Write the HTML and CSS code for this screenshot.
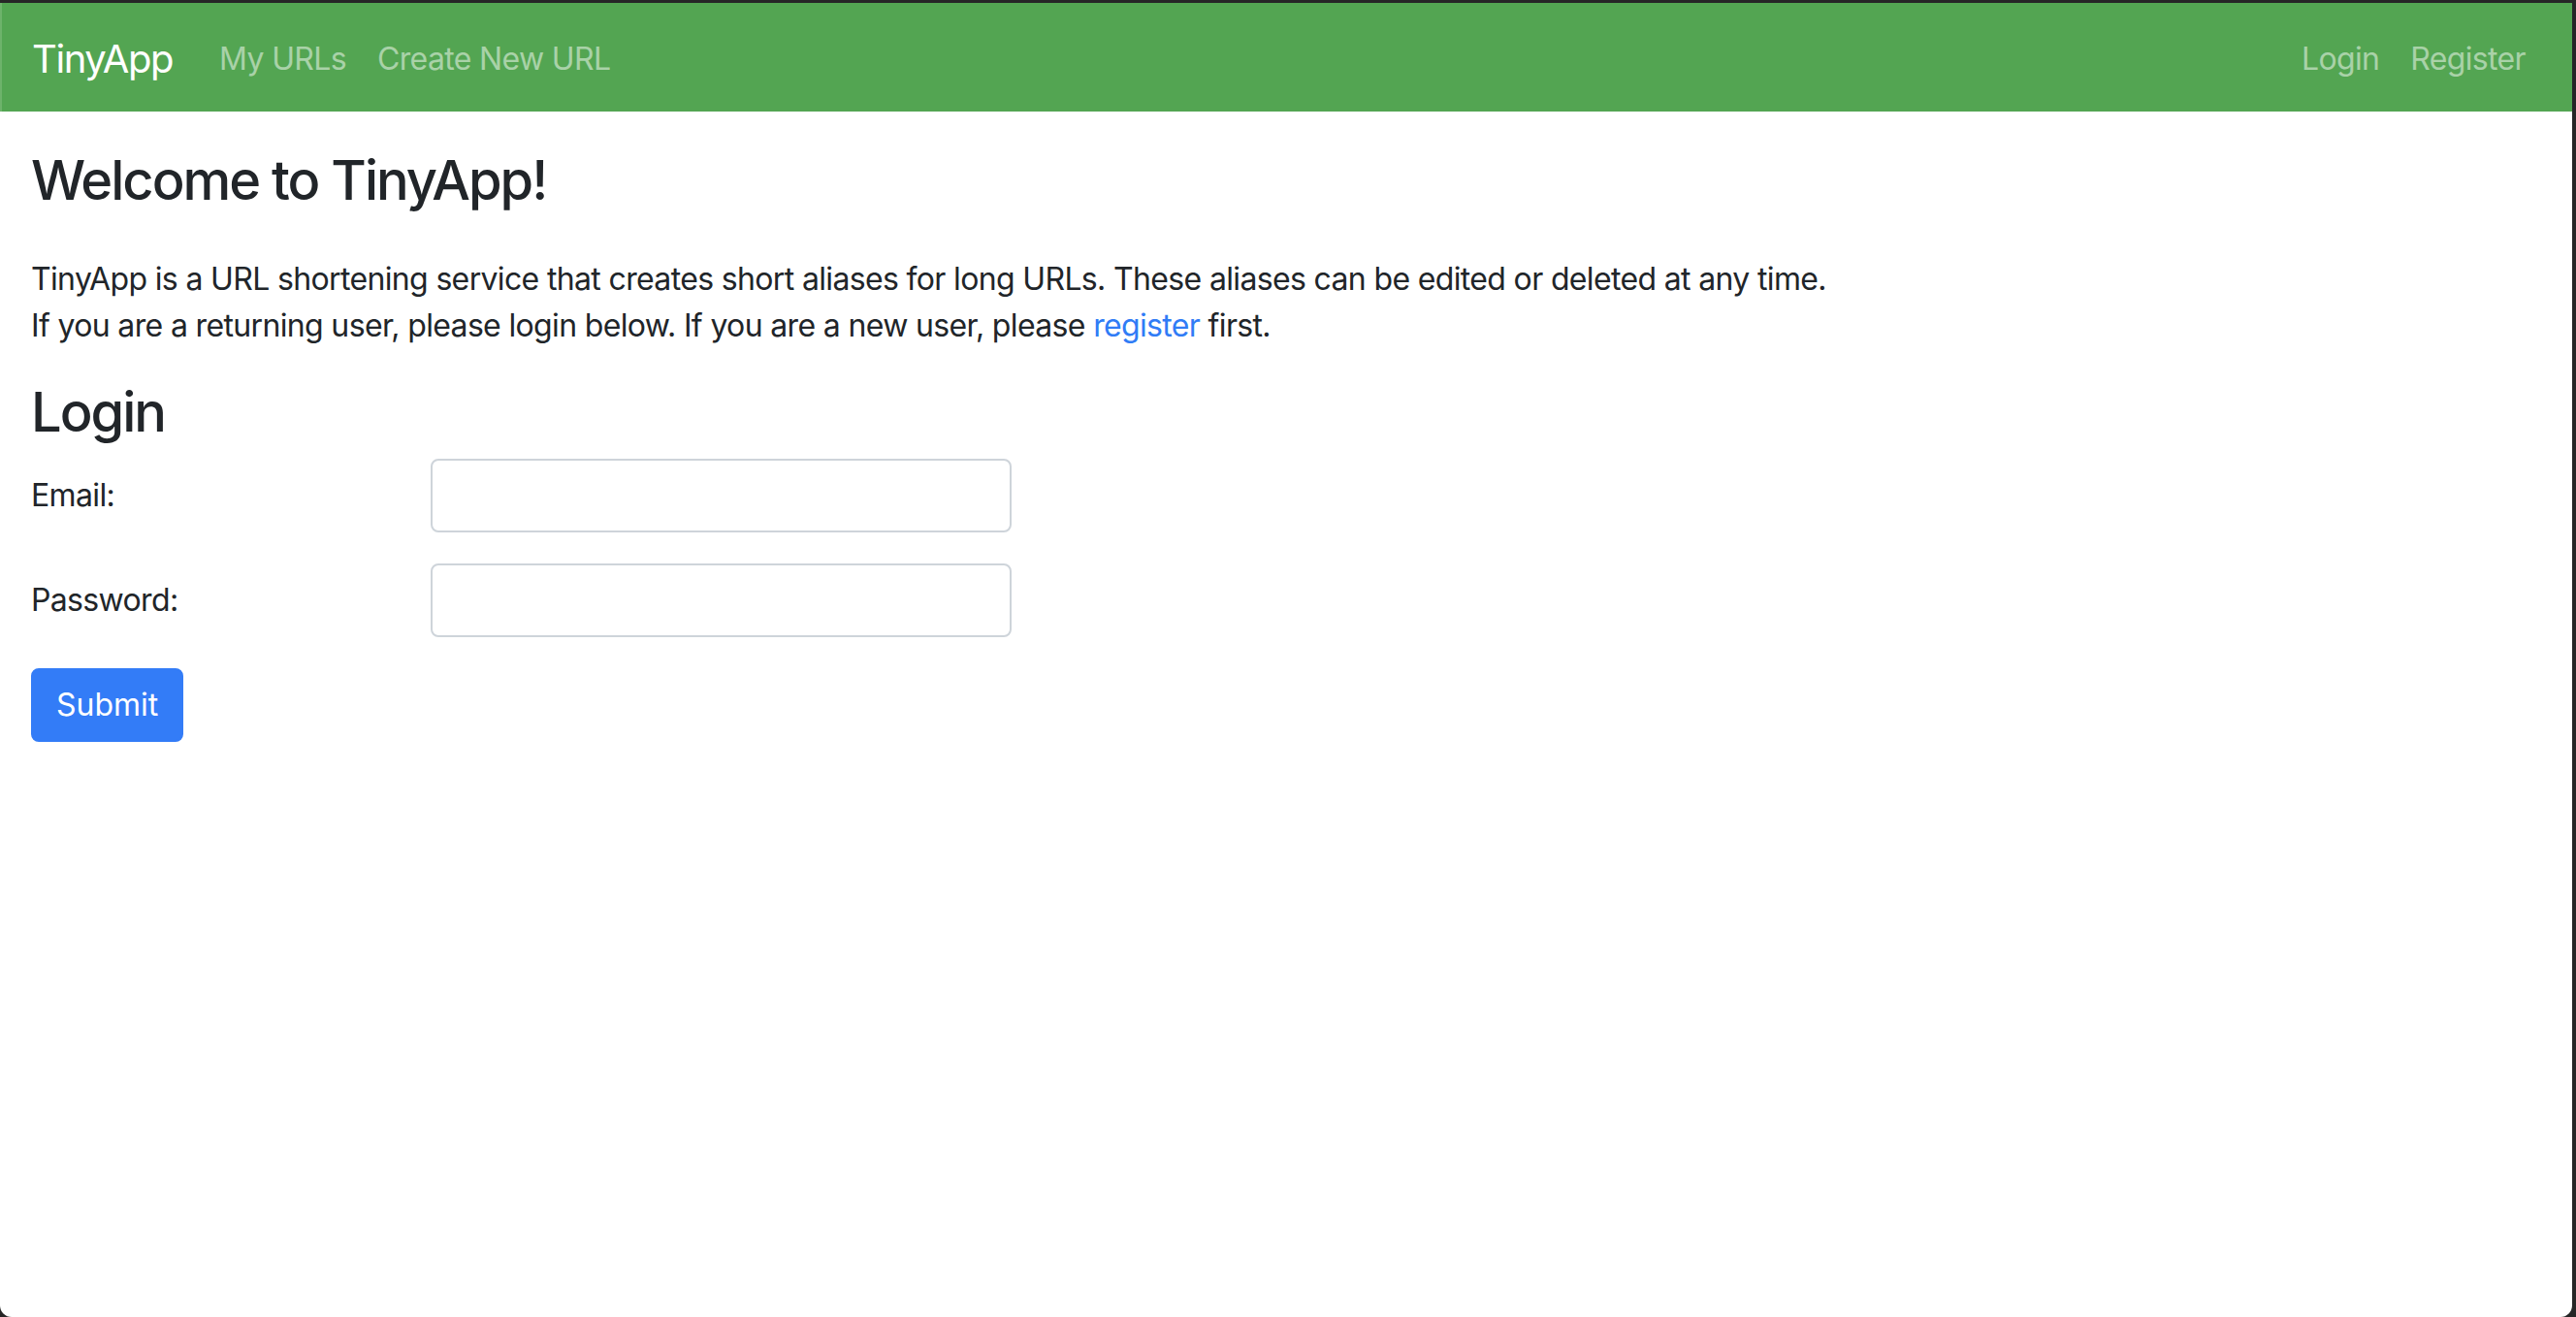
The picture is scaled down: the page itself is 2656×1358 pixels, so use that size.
FILE: index.html
```html
<!DOCTYPE html>
<html lang="en">
<head>
<meta charset="utf-8">
<title>TinyApp</title>
<link rel="stylesheet" href="styles.css">
</head>
<body>
<div class="window">
  <nav class="navbar">
    <a class="brand" href="#">TinyApp</a>
    <ul class="nav nav-left">
      <li><a class="nav-link" href="#">My URLs</a></li>
      <li><a class="nav-link" href="#">Create New URL</a></li>
    </ul>
    <ul class="nav nav-right">
      <li><a class="nav-link" href="#">Login</a></li>
      <li><a class="nav-link" href="#">Register</a></li>
    </ul>
  </nav>
  <main class="content">
    <h3 class="title">Welcome to TinyApp!</h3>
    <p class="intro">TinyApp is a URL shortening service that creates short aliases for long URLs. These aliases can be edited or deleted at any time.<br>If you are a returning user, please login below. If you are a new user, please <a href="#" class="link">register</a> first.</p>
    <h3 class="subtitle">Login</h3>
    <form class="form">
      <div class="form-row">
        <label class="label" for="email">Email:</label>
        <input class="input" id="email" type="email">
      </div>
      <div class="form-row">
        <label class="label" for="password">Password:</label>
        <input class="input" id="password" type="password">
      </div>
      <button class="btn" type="button">Submit</button>
    </form>
  </main>
</div>
</body>
</html>
```
FILE: styles.css
```css
html {
  background: #262626;
}
body {
  margin: 0;
  font-family: Inter, "Liberation Sans", sans-serif;
  font-size: 32px;
  line-height: 1.5;
  letter-spacing: -0.65px;
  color: #212529;
}
.window {
  margin: 3px 4px 0 0;
  min-height: 1355px;
  box-sizing: border-box;
  background: #fff;
  border-radius: 0 0 12px 12px;
  overflow: hidden;
}
.navbar {
  display: flex;
  align-items: center;
  height: 112px;
  box-sizing: border-box;
  padding: 18px 32px 14px 33px;
  background: #53a552;
  box-shadow: inset 2px 0 0 #6db36b;
}
.brand {
  font-size: 40px;
  line-height: 60px;
  letter-spacing: -1.4px;
  padding: 10px 0;
  margin-right: 32px;
  color: #fff;
  text-decoration: none;
}
.nav {
  display: flex;
  list-style: none;
  margin: 0;
  padding: 0;
}
.nav-right {
  margin-left: auto;
}
.nav-link {
  display: block;
  padding: 16px;
  color: rgba(255, 255, 255, 0.5);
  text-decoration: none;
}
.content {
  padding: 38px 32px 0 32px;
}
.title, .subtitle {
  margin: 0;
  font-size: 56px;
  font-weight: 500;
  line-height: 1.2;
  letter-spacing: -2px;
}
.title {
  margin-bottom: 44px;
}
.subtitle {
  margin-bottom: 14px;
}
.intro {
  margin: 0 0 32px 0;
}
.link {
  color: #307cf6;
  text-decoration: none;
}
.form-row {
  display: grid;
  grid-template-columns: 412px 599px;
  align-items: center;
  margin-bottom: 32px;
}
.label {
  display: block;
}
.input {
  box-sizing: border-box;
  height: 76px;
  width: 599px;
  border: 2px solid #ced4da;
  border-radius: 8px;
  background: #fff;
  font: inherit;
  padding: 12px 24px;
}
.btn {
  display: block;
  box-sizing: border-box;
  height: 76px;
  padding: 12px 24px;
  font: inherit;
  color: #fff;
  background: #337cf7;
  border: 2px solid #337cf7;
  border-radius: 8px;
}
```
